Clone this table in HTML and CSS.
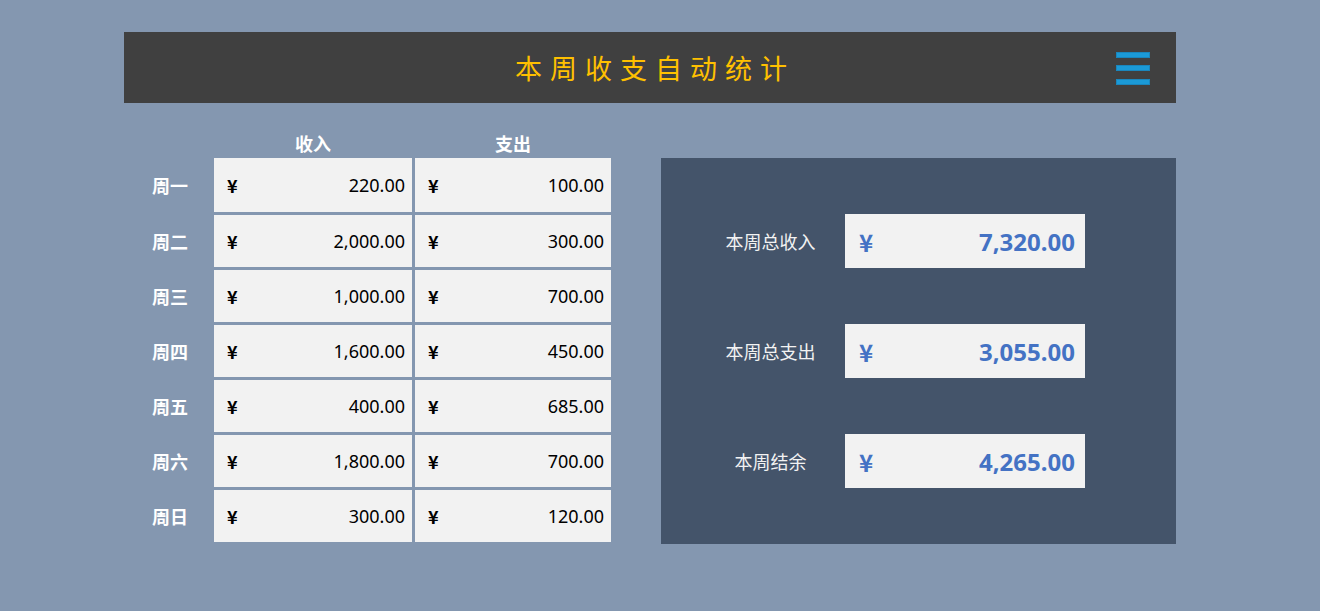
FILE: index.html
```html
<!DOCTYPE html>
<html lang="zh">
<head>
<meta charset="utf-8">
<title>本周收支自动统计</title>
<link rel="stylesheet" href="styles.css">
</head>
<body>
<div class="page">
  <header class="topbar">
    <div class="spacer"></div>
    <h1 class="title">本周收支自动统计</h1>
    <div class="menu"><span></span><span></span><span></span></div>
  </header>
  <main class="content">
    <div class="week">
      <div class="head-empty"></div>
      <div class="col-head">收入</div>
      <div class="col-head">支出</div>

      <div class="day first">周一</div>
      <div class="cell first"><span class="cur">¥</span><span>220.00</span></div>
      <div class="cell first"><span class="cur">¥</span><span>100.00</span></div>

      <div class="day">周二</div>
      <div class="cell"><span class="cur">¥</span><span>2,000.00</span></div>
      <div class="cell"><span class="cur">¥</span><span>300.00</span></div>

      <div class="day">周三</div>
      <div class="cell"><span class="cur">¥</span><span>1,000.00</span></div>
      <div class="cell"><span class="cur">¥</span><span>700.00</span></div>

      <div class="day">周四</div>
      <div class="cell"><span class="cur">¥</span><span>1,600.00</span></div>
      <div class="cell"><span class="cur">¥</span><span>450.00</span></div>

      <div class="day">周五</div>
      <div class="cell"><span class="cur">¥</span><span>400.00</span></div>
      <div class="cell"><span class="cur">¥</span><span>685.00</span></div>

      <div class="day">周六</div>
      <div class="cell"><span class="cur">¥</span><span>1,800.00</span></div>
      <div class="cell"><span class="cur">¥</span><span>700.00</span></div>

      <div class="day">周日</div>
      <div class="cell"><span class="cur">¥</span><span>300.00</span></div>
      <div class="cell"><span class="cur">¥</span><span>120.00</span></div>
    </div>

    <section class="summary">
      <div class="sum-row">
        <div class="sum-label">本周总收入</div>
        <div class="sum-value"><span class="cur">¥</span><span>7,320.00</span></div>
      </div>
      <div class="sum-row">
        <div class="sum-label">本周总支出</div>
        <div class="sum-value"><span class="cur">¥</span><span>3,055.00</span></div>
      </div>
      <div class="sum-row">
        <div class="sum-label">本周结余</div>
        <div class="sum-value"><span class="cur">¥</span><span>4,265.00</span></div>
      </div>
    </section>
  </main>
</div>
</body>
</html>
```

FILE: styles.css
```css
html, body {
  margin: 0;
  padding: 0;
}
body {
  background: #8497b0;
  font-family: "Noto Sans", "Open Sans", "Noto Sans CJK SC", sans-serif;
  width: 1320px;
  height: 611px;
  overflow: hidden;
}
.page {
  width: 1052px;
  margin-left: 124px;
  padding-top: 32px;
}
.topbar {
  height: 71px;
  background: #404040;
  display: grid;
  grid-template-columns: 1fr auto 1fr;
  align-items: center;
}
.title {
  margin: 0;
  padding-left: 10px;
  font-family: "Noto Sans CJK SC", sans-serif;
  font-weight: 400;
  font-size: 27px;
  letter-spacing: 8px;
  color: #ffc000;
  line-height: 1;
}
.menu {
  justify-self: end;
  margin-right: 26px;
  width: 34px;
  display: flex;
  flex-direction: column;
  gap: 7.5px;
  margin-top: 1px;
}
.menu span {
  display: block;
  height: 6px;
  background: #1b9ad7;
  box-shadow: inset 0 0 0 1px #1a86bd;
}
.content {
  display: flex;
  align-items: flex-start;
  margin-top: 24px;
}
.week {
  display: grid;
  grid-template-columns: 87px 198px 196px;
  grid-template-rows: 28px 54px repeat(6, 52px);
  gap: 3px;
}
.col-head {
  color: #ffffff;
  font-family: "Noto Sans CJK SC", sans-serif;
  font-weight: 700;
  font-size: 18px;
  text-align: center;
  align-self: end;
  line-height: 20px;
  padding-bottom: 2px;
}
.day {
  color: #ffffff;
  font-family: "Noto Sans CJK SC", sans-serif;
  font-weight: 700;
  font-size: 18px;
  display: flex;
  align-items: center;
  justify-content: center;
  padding-left: 5px;
}
.cell {
  background: #f2f2f2;
  color: #000000;
  font-size: 18px;
  display: flex;
  align-items: center;
  justify-content: space-between;
  padding: 0 7px 0 13px;
}
.cell .cur {
  font-family: "Noto Sans CJK SC", sans-serif;
  font-size: 18px;
  font-weight: 700;
}
.summary {
  margin-top: 31px;
  margin-left: 50px;
  width: 515px;
  background: #44546a;
  padding: 56px 0;
  display: flex;
  flex-direction: column;
  gap: 56px;
}
.sum-row {
  display: flex;
  align-items: center;
  padding-left: 35px;
}
.sum-label {
  width: 149px;
  text-align: center;
  color: #f2f2f2;
  font-family: "Noto Sans CJK SC", sans-serif;
  font-size: 18px;
}
.sum-value {
  width: 240px;
  height: 54px;
  box-sizing: border-box;
  background: #f2f2f2;
  color: #4472c4;
  font-weight: 700;
  font-size: 24px;
  display: flex;
  align-items: center;
  justify-content: space-between;
  padding: 0 10px 0 14px;
}
.sum-value .cur {
  font-family: "Noto Sans CJK SC", sans-serif;
  font-size: 24px;
}
```
